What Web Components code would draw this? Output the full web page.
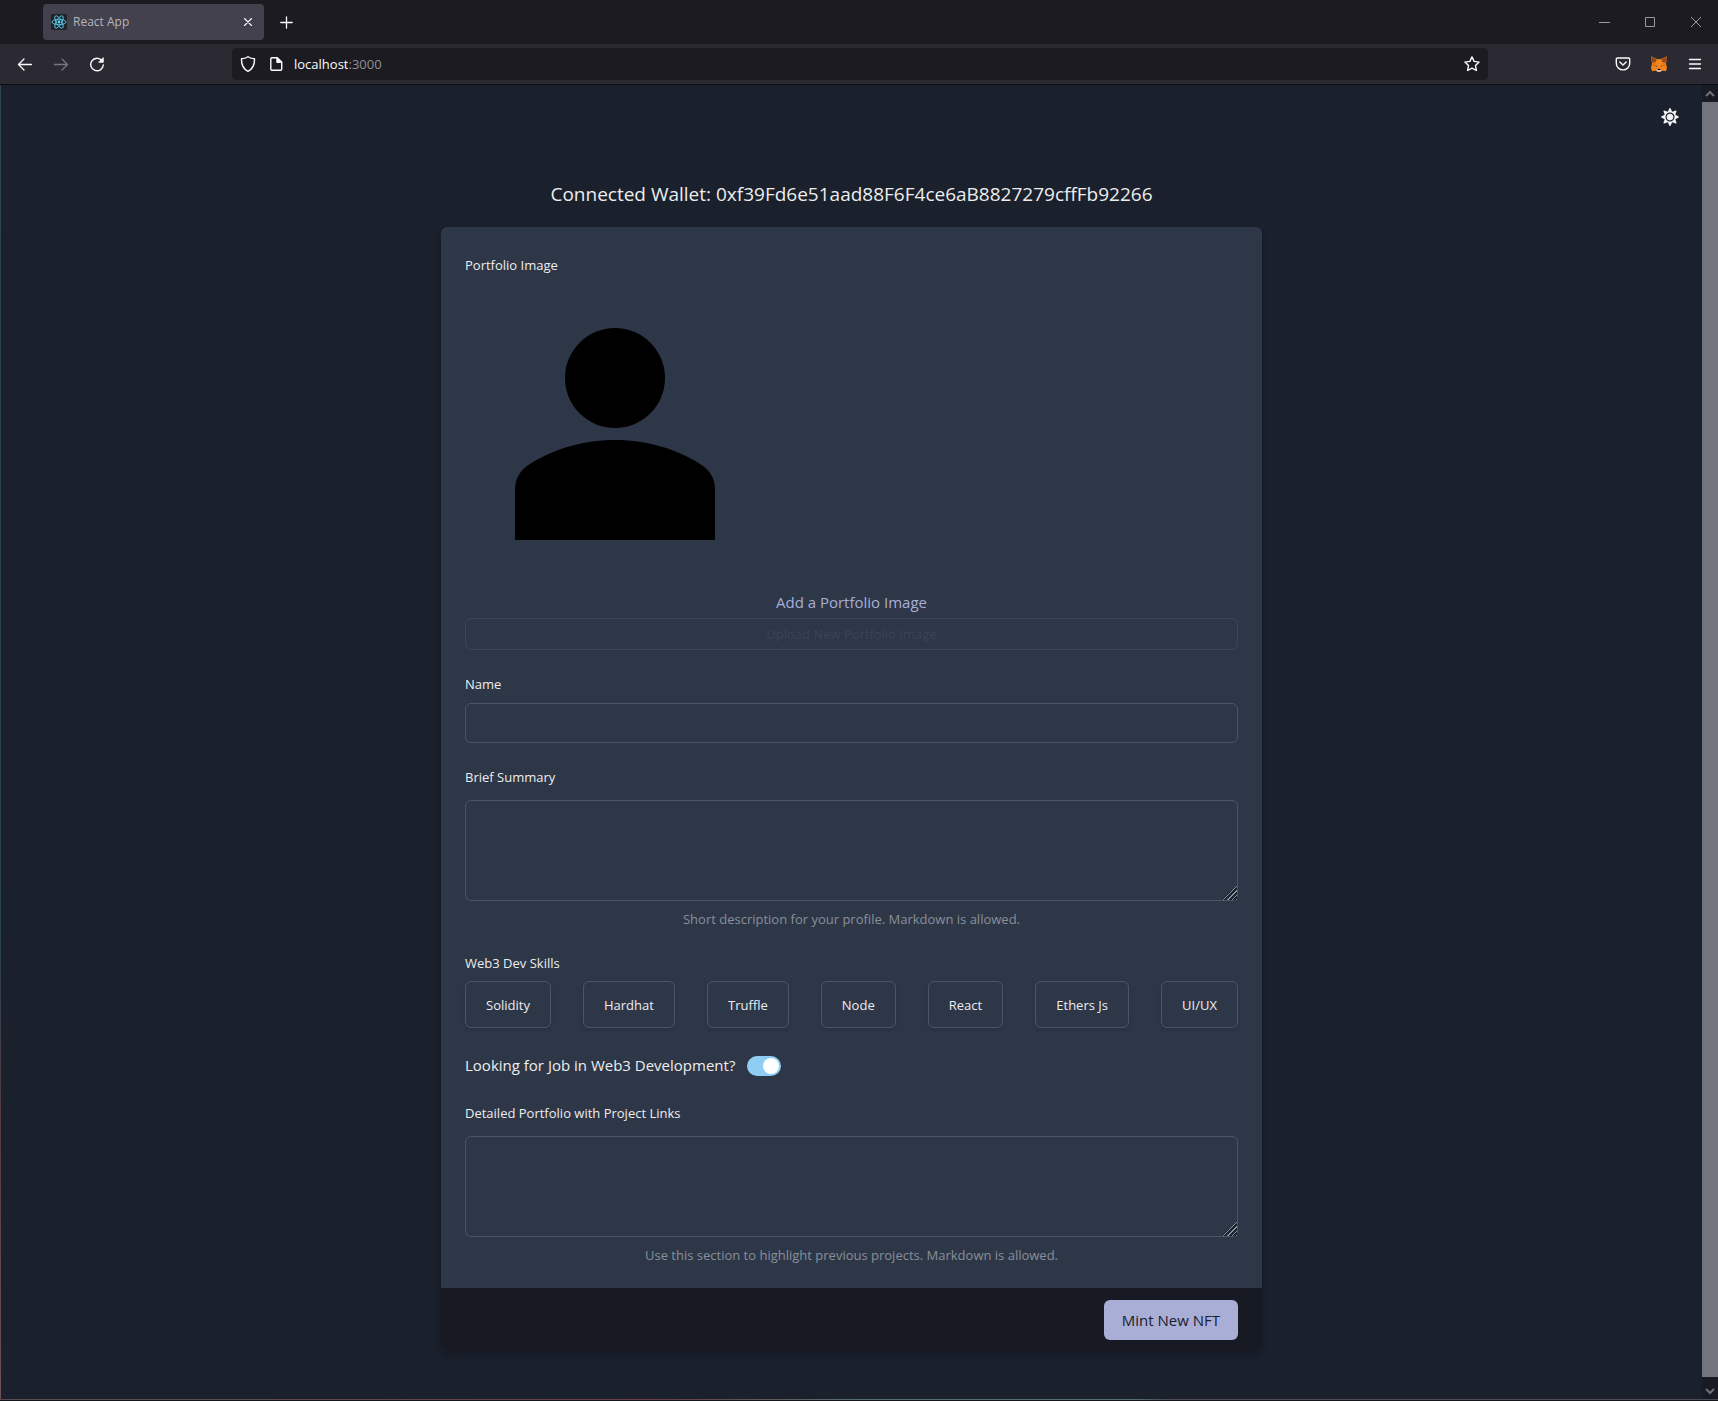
<!DOCTYPE html>
<html lang="en">
<head>
<meta charset="utf-8">
<title>React App</title>
<style>
  :root {
    --page: #1a202c;
    --card: #2d3748;
    --footer: #171923;
    --line: #4c5565;
    --text: #ededee;
    --muted: #898f9a;
    --accent: #a9aed7;
    --small: 13px;
    --medium: 15px;
    --large: 19px;
  }
  body {
    margin: 0;
    background: var(--page);
    color: var(--text);
    font: var(--medium)/24px "Open Sans", "Noto Sans", sans-serif;
  }
</style>
</head>
<body>
<browser-window>
  <browser-tab slot="tabs">React App</browser-tab>
  <browser-toolbar slot="toolbar" host="localhost" port=":3000"></browser-toolbar>
  <portfolio-page></portfolio-page>
</browser-window>

<script>
const define = (name, html, setup) => {
  const template = document.createElement('template');
  template.innerHTML = html;
  customElements.define(name, class extends HTMLElement {
    connectedCallback() {
      if (this.shadowRoot) return;
      const root = this.attachShadow({ mode: 'open' });
      root.append(template.content.cloneNode(true));
      if (setup) setup(this, root);
    }
  });
};

const reset = `
  :host, *, ::before, ::after { box-sizing: border-box; }
  button, input, textarea { font: inherit; color: inherit; background: none; border: 0; margin: 0; padding: 0; }
  svg { display: block; }
`;

define('browser-tab', `
  <style>${reset}
    :host { display: flex; align-items: center; gap: 6px; width: 221px; height: 36px; padding: 0 8px;
      border-radius: 4px; background: #42414d; color: #b5b4bb; font-size: 12px; line-height: 16px; }
    span { flex: 1; }
    button { display: grid; place-items: center; width: 16px; height: 16px; color: #fbfbfe; }
  </style>
  <svg width="16" height="16" viewBox="0 0 16 16" fill="none">
    <rect width="16" height="16" rx="1" fill="#20232a"/>
    <g stroke="#61dafb" stroke-width=".8">
      <ellipse cx="8" cy="8" rx="7" ry="2.7"/>
      <ellipse cx="8" cy="8" rx="7" ry="2.7" transform="rotate(60 8 8)"/>
      <ellipse cx="8" cy="8" rx="7" ry="2.7" transform="rotate(120 8 8)"/>
    </g>
    <circle cx="8" cy="8" r="1.4" fill="#61dafb"/>
  </svg>
  <span><slot></slot></span>
  <button aria-label="Close tab">
    <svg width="8" height="8" viewBox="0 0 8 8" stroke="currentColor" stroke-width="1.1" stroke-linecap="round"><path d="M.5.5l7 7M7.5.5l-7 7"/></svg>
  </button>
`);

define('browser-toolbar', `
  <style>${reset}
    :host { display: flex; align-items: center; height: 40px; padding: 0 5px 0 7px; background: #2b2a33; color: #fbfbfe; }
    button { flex: none; display: grid; place-items: center; width: 36px; height: 36px; }
    button:disabled { color: #77767f; }
    .address { flex: 1; min-width: 0; display: flex; align-items: center; height: 32px; margin: 0 117px;
      padding: 0 7px 0 8px; border-radius: 4px; background: #1c1b22; font-size: var(--small); line-height: 20px; }
    .address > svg { flex: none; }
    .address > svg + svg { margin: 0 10px 0 12px; }
    .address button { width: 18px; margin-left: auto; }
    input { field-sizing: content; min-width: 0; outline: 0; }
    .port { color: #8f8e96; }
  </style>
  <button aria-label="Back"><svg width="16" height="16" viewBox="0 0 16 16" fill="none" stroke="currentColor" stroke-width="1.3" stroke-linecap="round" stroke-linejoin="round"><path d="M14.5 8.5h-13M7 3L1.500 8.500 7 14"/></svg></button>
  <button aria-label="Forward" disabled><svg width="16" height="16" viewBox="0 0 16 16" fill="none" stroke="currentColor" stroke-width="1.300" stroke-linecap="round" stroke-linejoin="round"><path d="M1.500 8.500h13M9 3l5.500 5.500L9 14"/></svg></button>
  <button aria-label="Reload"><svg width="16" height="16" viewBox="0 0 16 16" fill="none" stroke="currentColor" stroke-width="1.400" stroke-linecap="round"><path d="M12.900 4.500A6.300 6.300 0 1 0 14.300 9"/><path d="M14.300 2v4.300H10z" fill="currentColor" stroke-width=".8" stroke-linejoin="round"/></svg></button>
  <label class="address">
    <svg width="16" height="16" viewBox="0 0 16 16" fill="none" stroke="currentColor" stroke-width="1.400" stroke-linejoin="round"><path d="M8 .8C6.200 2.100 3.700 2.800 1.500 2.800 1.300 8.500 3.200 13 8 15.300c4.800-2.300 6.700-6.800 6.500-12.500C12.300 2.800 9.800 2.100 8 .8z"/></svg>
    <svg width="16" height="16" viewBox="0 0 16 16" fill="none" stroke="currentColor" stroke-width="1.400" stroke-linejoin="round"><path d="M3.800 1.700h5.400L13.700 6v7.300a1 1 0 0 1-1 1H3.800a1 1 0 0 1-1-1V2.700a1 1 0 0 1 1-1z"/><path d="M9 2v4.200h4.500z" fill="currentColor"/></svg>
    <input aria-label="Address">
    <span class="port"></span>
    <button aria-label="Bookmark"><svg width="16" height="16" viewBox="0 0 16 16" fill="none" stroke="currentColor" stroke-width="1.400" stroke-linejoin="round"><path d="M8 .9l2.100 4.500 5 .7-3.600 3.400.9 5L8 12.200l-4.400 2.300.9-5L.9 6.100l5-.7z"/></svg></button>
  </label>
  <button aria-label="Pocket"><svg width="16" height="16" viewBox="0 0 16 16" fill="none" stroke="currentColor" stroke-width="1.400" stroke-linecap="round" stroke-linejoin="round"><path d="M2.500 2h11a1.200 1.200 0 0 1 1.200 1.200v4A6.700 6.700 0 0 1 1.300 7.200v-4A1.200 1.200 0 0 1 2.500 2z"/><path d="M4.800 6L8 9l3.200-3"/></svg></button>
  <button aria-label="MetaMask"><svg width="18" height="18" viewBox="0 0 18 18">
    <path fill="#e2761b" d="M1.300 1.300L7 4h4l5.700-2.700.3 3-1 4 1 4-1 3.900-3.800-.4L10.400 17H7.600l-1.800-1.200-3.800.4L1 12.300l1-4-1-4z"/>
    <path fill="#8a4a20" d="M1.300 1.300L6.800 5 5.500 7l-3.400.6L1.300 4.500zM16.700 1.300L11.200 5l1.300 2 3.400.6.800-3.100z"/>
    <path fill="#f6851b" d="M6.700 5h4.600l1.700 5-1.500 4h-5L5 10zM1.300 12l3.900-1 1.300 4-4.300.9zM16.700 12l-3.900-1-1.300 4 4.300.9z"/>
    <path fill="#2c3442" d="M5 10.200l2.200.7-.7.800zM13 10.200l-2.200.7.7.800z"/>
    <path fill="#d7c1b3" d="M6 15l1.800-1.300h2.400L12 15l-1.700 1.800H7.700z"/>
    <path fill="#161616" d="M7.700 13.700h2.600l.3 1.400H7.400z"/>
  </svg></button>
  <button aria-label="Menu"><svg width="16" height="16" viewBox="0 0 16 16" stroke="currentColor" stroke-width="1.300" stroke-linecap="round"><path d="M2.500 3.500h11M2.500 8h11M2.500 12.500h11"/></svg></button>
`, (el, root) => {
  root.querySelector('input').value = el.getAttribute('host');
  root.querySelector('.port').textContent = el.getAttribute('port');
});

define('browser-window', `
  <style>${reset}
    :host { display: flex; flex-direction: column; min-height: 100vh; }
    .tabs { display: flex; align-items: center; height: 44px; padding-left: 43px; background: #1c1b22; }
    button { display: grid; place-items: center; height: 36px; width: 44px; color: #fbfbfe; }
    .controls { display: flex; margin-left: auto; }
    .controls button { width: 46px; color: #9b9aa1; }
    .controls button:last-child { width: 45px; }
    .view { flex: 1; display: flex; border-top: 1px solid #0c0c11; }
    .edge { width: 1px; background: linear-gradient(#2c4450, #27414b 65%, #5a3a42 80%, #6a5258); }
    ::slotted(portfolio-page) { flex: 1; min-width: 0; }
    .scroll { display: flex; flex-direction: column; align-items: center; width: 16px; background: #191b24; color: #6f717b; }
    .scroll svg { margin: 5px 0 4px; }
    .scroll .thumb + svg { margin-top: 10px; }
    .thumb { flex: 1; align-self: stretch; background: #72747e; }
    .bottom { height: 2px; border-bottom: 1px solid #15161c; background: linear-gradient(90deg, #5e4a50 15%, #6b3c41 38%, #56706f 50%, #56706f 66%, #4c4a50 68%, #4c4a50); }
  </style>
  <div class="tabs">
    <slot name="tabs"></slot>
    <button aria-label="New tab"><svg width="13" height="13" viewBox="0 0 13 13" stroke="currentColor" stroke-width="1.300" stroke-linecap="round"><path d="M6.500.8v11.400M.8 6.500h11.400"/></svg></button>
    <div class="controls">
      <button aria-label="Minimize"><svg width="11" height="11" viewBox="0 0 11 11" stroke="currentColor"><path d="M0 5.500h11"/></svg></button>
      <button aria-label="Maximize"><svg width="10" height="10" viewBox="0 0 10 10" fill="none" stroke="currentColor"><path d="M.5.5h9v9h-9z"/></svg></button>
      <button aria-label="Close"><svg width="10" height="10" viewBox="0 0 10 10" stroke="currentColor"><path d="M0 0l10 10M10 0L0 10"/></svg></button>
    </div>
  </div>
  <slot name="toolbar"></slot>
  <div class="view">
    <div class="edge"></div>
    <slot></slot>
    <div class="scroll">
      <svg width="10" height="8" viewBox="0 0 10 8" fill="none" stroke="currentColor" stroke-width="2"><path d="M1 6l4-4 4 4"/></svg>
      <div class="thumb"></div>
      <svg width="10" height="8" viewBox="0 0 10 8" fill="none" stroke="currentColor" stroke-width="2"><path d="M1 2l4 4 4-4"/></svg>
    </div>
  </div>
  <div class="bottom"></div>
`);

/* A labelled text box; "multiline" makes it a text area, "help" adds a note below it. */
define('form-field', `
  <style>${reset}
    :host { display: flex; flex-direction: column; gap: 8px; font-size: var(--small); line-height: 20px; }
    label { line-height: 21px; }
    input, textarea { width: 100%; padding: 8px 16px; border: 1px solid var(--line); border-radius: 6px; }
    input { height: 40px; }
    textarea { display: block; height: 101px; margin-top: 4px; resize: vertical; font-size: var(--medium); }
    textarea::-webkit-resizer {
      background:
        linear-gradient(135deg, var(--card) 50%, transparent 50%),
        repeating-linear-gradient(135deg, #1b222d 0 2px, #8a929e 2px 3px);
    }
    p { margin: 0; text-align: center; color: var(--muted); }
  </style>
  <label for="box"></label>
`, (el, root) => {
  const multiline = el.hasAttribute('multiline');
  const box = document.createElement(multiline ? 'textarea' : 'input');
  box.id = 'box';
  root.querySelector('label').textContent = el.getAttribute('label');
  root.append(box);
  if (el.hasAttribute('help')) {
    const help = document.createElement('p');
    help.textContent = el.getAttribute('help');
    root.append(help);
  }
});

define('skill-toggle', `
  <style>${reset}
    :host { display: block; }
    button { display: block; height: 47px; padding: 0 20px; border: 1px solid var(--line); border-radius: 6px;
      box-shadow: 0 2px 4px rgba(0,0,0,.12); font-size: var(--small); line-height: 20px; }
  </style>
  <button aria-pressed="false"><slot></slot></button>
`);

define('job-switch', `
  <style>${reset}
    :host { display: flex; align-items: center; gap: 12px; line-height: 27px; }
    input { appearance: none; width: 34px; height: 20px; padding: 2px; border-radius: 10px; background: #63718a; }
    input::before { content: ""; display: block; width: 16px; height: 16px; border-radius: 50%; background: #fff; }
    input:checked { background: #90cdf4; }
    input:checked::before { margin-left: 14px; }
  </style>
  <label for="switch"><slot></slot></label>
  <input id="switch" type="checkbox" role="switch" checked>
`);

define('portfolio-page', `
  <style>${reset}
    :host { display: flex; flex-direction: column; align-items: center; padding: 12px 12px 46px; }
    .theme { display: grid; place-items: center; align-self: flex-end; width: 40px; height: 40px; }
    h1 { margin: 42px 0 18px; font-size: var(--large); font-weight: 400; line-height: 30px; }
    form { width: 100%; max-width: 821px; border-radius: 6px; overflow: hidden; background: var(--card);
      box-shadow: 0 4px 6px rgba(0,0,0,.1), 0 2px 4px rgba(0,0,0,.06); }
    .fields { display: flex; flex-direction: column; gap: 24px; padding: 28px 24px 23px; }
    .group { display: flex; flex-direction: column; gap: 7px; }
    .label { font-size: var(--small); line-height: 21px; }
    .picture { display: flex; flex-direction: column; }
    .picture a { align-self: center; margin-top: 6px; color: var(--accent); text-decoration: none; line-height: 26px; }
    .picture svg { margin-top: 7px; }
    .upload { height: 32px; margin-top: 3px; border: 1px solid #3c4657; border-radius: 6px; color: #3b4455; font-size: var(--small); line-height: 20px; }
    .skills { display: flex; flex-wrap: wrap; justify-content: space-between; gap: 8px; }
    footer { display: flex; justify-content: flex-end; padding: 12px 24px; background: var(--footer); }
    .mint { height: 40px; padding: 0 18px; border-radius: 6px; background: var(--accent); color: #1a202c; }
  </style>
  <button class="theme" aria-label="Switch to light mode"><svg width="18" height="18" viewBox="0 0 512 512" fill="#f1f2f4"><path d="M256 160c-52.900 0-96 43.100-96 96s43.100 96 96 96 96-43.100 96-96-43.100-96-96-96zm246.400 80.500l-94.700-47.300 33.500-100.400c4.500-13.600-8.400-26.500-21.900-21.900l-100.400 33.500-47.400-94.800c-6.400-12.800-24.600-12.800-31 0l-47.300 94.700L92.700 70.800c-13.600-4.500-26.500 8.400-21.900 21.900l33.500 100.400-94.700 47.400c-12.800 6.400-12.800 24.600 0 31l94.700 47.300-33.500 100.500c-4.500 13.600 8.400 26.500 21.900 21.900l100.400-33.500 47.300 94.700c6.400 12.800 24.600 12.800 31 0l47.300-94.700 100.400 33.500c13.600 4.500 26.500-8.400 21.900-21.900l-33.500-100.400 94.700-47.300c13-6.500 13-24.700.2-31.100zm-155.900 106c-49.900 49.900-131.100 49.900-181 0-49.900-49.900-49.900-131.100 0-181 49.900-49.900 131.100-49.900 181 0 49.900 49.900 49.900 131.100 0 181z"/></svg></button>
  <h1>Connected Wallet: 0xf39Fd6e51aad88F6F4ce6aB8827279cffFb92266</h1>
  <form>
    <div class="fields">
      <div class="picture">
        <span class="label">Portfolio Image</span>
        <svg width="300" height="300" viewBox="0 0 300 300"><circle cx="150" cy="95" r="50"/><path d="M50 257v-51c0-9 4-17 12-23C85 167 117 157 150 157s65 10 88 26c8 6 12 14 12 23v51z"/></svg>
        <a href="#">Add a Portfolio Image</a>
        <button class="upload" type="button">Upload New Portfolio Image</button>
      </div>
      <form-field label="Name"></form-field>
      <form-field label="Brief Summary" multiline help="Short description for your profile. Markdown is allowed."></form-field>
      <div class="group">
        <span class="label">Web3 Dev Skills</span>
        <div class="skills">
          <skill-toggle>Solidity</skill-toggle>
          <skill-toggle>Hardhat</skill-toggle>
          <skill-toggle>Truffle</skill-toggle>
          <skill-toggle>Node</skill-toggle>
          <skill-toggle>React</skill-toggle>
          <skill-toggle>Ethers Js</skill-toggle>
          <skill-toggle>UI/UX</skill-toggle>
        </div>
      </div>
      <job-switch>Looking for Job in Web3 Development?</job-switch>
      <form-field label="Detailed Portfolio with Project Links" multiline help="Use this section to highlight previous projects. Markdown is allowed."></form-field>
    </div>
    <footer><button class="mint" type="button">Mint New NFT</button></footer>
  </form>
`);
</script>
</body>
</html>
